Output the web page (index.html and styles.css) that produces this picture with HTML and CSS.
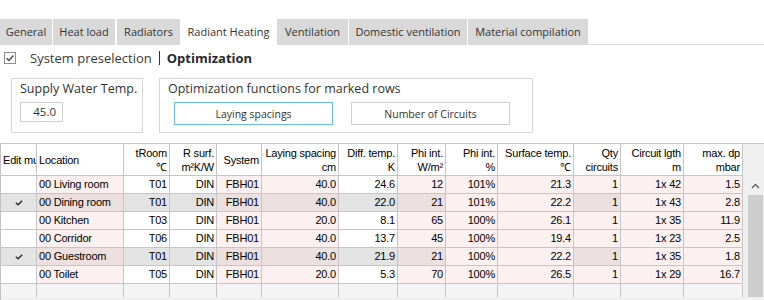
FILE: index.html
```html
<!DOCTYPE html>
<html lang="en">
<head>
    <meta charset="UTF-8">
    <title>Radiant Heating</title>
    <link rel="stylesheet" href="styles.css">
</head>
<body>
    <div class="tabs">
        <div class="tab tab-general">General</div>
        <div class="tab tab-heat">Heat load</div>
        <div class="tab tab-radiators">Radiators</div>
        <div class="tab tab-radiant active">Radiant Heating</div>
        <div class="tab tab-ventilation">Ventilation</div>
        <div class="tab tab-domestic">Domestic ventilation</div>
        <div class="tab tab-material">Material compilation</div>
        <div class="tab-rest"></div>
    </div>

    <div class="toolbar">
        <svg class="checkbox" width="12" height="12" viewBox="0 0 12 12">
            <rect x="0.5" y="0.5" width="11" height="11" fill="#fff" stroke="#8f8f8f"/>
            <polyline points="2.6,6.2 4.9,8.4 9.4,3.6" fill="none" stroke="#4a4a4a" stroke-width="1.4"/>
        </svg>
        <span class="preselect">System preselection</span>
        <span class="divider"></span>
        <span class="optimization">Optimization</span>
    </div>

    <div class="options">
        <div class="group group-supply">
            <div class="group-title">Supply Water Temp.</div>
            <div class="temp-input">45.0</div>
        </div>
        <div class="group group-functions">
            <div class="group-title">Optimization functions for marked rows</div>
            <div class="buttons">
                <button class="btn focused">Laying spacings</button>
                <button class="btn">Number of Circuits</button>
            </div>
        </div>
    </div>

    <div class="grid-wrap">
        <div class="grid">
            <div class="row head">
                <div class="hcell left">Edit mu</div>
                <div class="hcell left">Location</div>
                <div class="hcell"><span>tRoom</span><span>℃</span></div>
                <div class="hcell"><span>R surf.</span><span>m²K/W</span></div>
                <div class="hcell"><span>System</span></div>
                <div class="hcell"><span>Laying spacing</span><span>cm</span></div>
                <div class="hcell"><span>Diff. temp.</span><span>K</span></div>
                <div class="hcell"><span>Phi int.</span><span>W/m²</span></div>
                <div class="hcell"><span>Phi int.</span><span>%</span></div>
                <div class="hcell"><span>Surface temp.</span><span>℃</span></div>
                <div class="hcell"><span>Qty</span><span>circuits</span></div>
                <div class="hcell"><span>Circuit lgth</span><span>m</span></div>
                <div class="hcell"><span>max. dp</span><span>mbar</span></div>
            </div>

            <div class="row">
                <div class="cell mark"></div>
                <div class="cell pink loc">00 Living room</div>
                <div class="cell">T01</div>
                <div class="cell">DIN</div>
                <div class="cell pink">FBH01</div>
                <div class="cell pink">40.0</div>
                <div class="cell">24.6</div>
                <div class="cell pink">12</div>
                <div class="cell calc">101%</div>
                <div class="cell calc">21.3</div>
                <div class="cell pink">1</div>
                <div class="cell calc">1x 42</div>
                <div class="cell calc">1.5</div>
            </div>
            <div class="row marked">
                <div class="cell mark"><svg width="8" height="6" viewBox="0 0 8 6"><polyline points="0.8,2.6 3,4.8 7.2,0.8" fill="none" stroke="#222" stroke-width="1.3"/></svg></div>
                <div class="cell pink loc">00 Dining room</div>
                <div class="cell">T01</div>
                <div class="cell">DIN</div>
                <div class="cell pink">FBH01</div>
                <div class="cell pink">40.0</div>
                <div class="cell">22.0</div>
                <div class="cell pink">21</div>
                <div class="cell calc">101%</div>
                <div class="cell calc">22.2</div>
                <div class="cell pink">1</div>
                <div class="cell calc">1x 43</div>
                <div class="cell calc">2.8</div>
            </div>
            <div class="row">
                <div class="cell mark"></div>
                <div class="cell pink loc">00 Kitchen</div>
                <div class="cell">T03</div>
                <div class="cell">DIN</div>
                <div class="cell pink">FBH01</div>
                <div class="cell pink">20.0</div>
                <div class="cell">8.1</div>
                <div class="cell pink">65</div>
                <div class="cell calc">100%</div>
                <div class="cell calc">26.1</div>
                <div class="cell pink">1</div>
                <div class="cell calc">1x 35</div>
                <div class="cell calc">11.9</div>
            </div>
            <div class="row">
                <div class="cell mark"></div>
                <div class="cell pink loc">00 Corridor</div>
                <div class="cell">T06</div>
                <div class="cell">DIN</div>
                <div class="cell pink">FBH01</div>
                <div class="cell pink">40.0</div>
                <div class="cell">13.7</div>
                <div class="cell pink">45</div>
                <div class="cell calc">100%</div>
                <div class="cell calc">19.4</div>
                <div class="cell pink">1</div>
                <div class="cell calc">1x 23</div>
                <div class="cell calc">2.5</div>
            </div>
            <div class="row marked">
                <div class="cell mark"><svg width="8" height="6" viewBox="0 0 8 6"><polyline points="0.8,2.6 3,4.8 7.2,0.8" fill="none" stroke="#222" stroke-width="1.3"/></svg></div>
                <div class="cell pink loc">00 Guestroom</div>
                <div class="cell">T01</div>
                <div class="cell">DIN</div>
                <div class="cell pink">FBH01</div>
                <div class="cell pink">40.0</div>
                <div class="cell">21.9</div>
                <div class="cell pink">21</div>
                <div class="cell calc">100%</div>
                <div class="cell calc">22.2</div>
                <div class="cell pink">1</div>
                <div class="cell calc">1x 35</div>
                <div class="cell calc">1.8</div>
            </div>
            <div class="row">
                <div class="cell mark"></div>
                <div class="cell pink loc">00 Toilet</div>
                <div class="cell">T05</div>
                <div class="cell">DIN</div>
                <div class="cell pink">FBH01</div>
                <div class="cell pink">20.0</div>
                <div class="cell">5.3</div>
                <div class="cell pink">70</div>
                <div class="cell calc">100%</div>
                <div class="cell calc">26.5</div>
                <div class="cell pink">1</div>
                <div class="cell calc">1x 29</div>
                <div class="cell calc">16.7</div>
            </div>
            <div class="row filler">
                <div class="cell"></div><div class="cell"></div><div class="cell"></div>
                <div class="cell"></div><div class="cell"></div><div class="cell"></div>
                <div class="cell"></div><div class="cell"></div><div class="cell"></div>
                <div class="cell"></div><div class="cell"></div><div class="cell"></div>
                <div class="cell"></div>
            </div>
        </div>

        <div class="vscroll">
            <div class="vs-head"></div>
            <div class="vs-body">
                <div class="vs-bar">
                    <div class="vs-arrow">
                        <svg width="9" height="6" viewBox="0 0 9 6"><polyline points="1,5 4.5,1.5 8,5" fill="none" stroke="#606060" stroke-width="1.4"/></svg>
                    </div>
                    <div class="vs-thumb"></div>
                </div>
            </div>
        </div>
    </div>
</body>
</html>
```

FILE: styles.css
```css
html, body {
    margin: 0;
    padding: 0;
    height: 300px;
    overflow: hidden;
}
body {
    background: #fff;
    color: #333;
    font-family: "Open Sans", "Noto Sans", sans-serif;
}

/* tabs */
.tabs {
    display: flex;
    margin-top: 19px;
    height: 26px;
}
.tab {
    box-sizing: border-box;
    height: 26px;
    line-height: 25px;
    background: #d9d9d9;
    color: #333;
    font-size: 11px;
    text-align: center;
    margin-right: 1px;
}
.tab.active {
    background: #fff;
}
.tab-general { width: 52px; }
.tab-heat { width: 62px; margin-right: 2px; }
.tab-radiators { width: 63px; margin-right: 0; }
.tab-radiant { width: 97px; margin-right: 0; }
.tab-ventilation { width: 71px; }
.tab-domestic { width: 118px; }
.tab-material { width: 120px; margin-right: 0; }
.tab-rest {
    flex: 1;
    box-sizing: border-box;
    height: 26px;
    border-bottom: 1px solid #d9d9d9;
}

/* toolbar */
.toolbar {
    display: flex;
    align-items: center;
    height: 25px;
    padding-left: 4px;
}
.checkbox {
    margin-right: 14px;
    margin-top: 1px;
}
.preselect {
    font-size: 13px;
    color: #3a3a3a;
}
.divider {
    width: 1px;
    height: 14px;
    background: #333;
    margin: 1px 7px 0 7px;
}
.optimization {
    font-size: 13px;
    font-weight: bold;
    color: #2a2a2a;
}

/* option groups */
.options {
    display: flex;
    gap: 16px;
    margin-top: 8px;
    padding-left: 11px;
}
.group {
    box-sizing: border-box;
    height: 55px;
    border: 1px solid #d7d7d7;
    padding: 1px 8px 0 8px;
}
.group-supply { width: 132px; }
.group-functions { width: 374px; }
.group-title {
    font-size: 12.5px;
    line-height: 17px;
    color: #333;
    white-space: nowrap;
}
.temp-input {
    box-sizing: border-box;
    width: 43px;
    height: 20px;
    margin-top: 5px;
    border: 1px solid #cfcfcf;
    font-size: 11.5px;
    line-height: 18px;
    text-align: right;
    padding-right: 6px;
    color: #333;
}
.buttons {
    display: flex;
    gap: 18px;
    margin-top: 5px;
    padding-left: 6px;
}
.btn {
    box-sizing: border-box;
    width: 159px;
    height: 23px;
    background: #fff;
    border: 1px solid #cfcfcf;
    font-family: "Open Sans", "Noto Sans", sans-serif;
    font-size: 10.5px;
    color: #333;
    padding: 0;
}
.btn.focused {
    border-color: #6cbde6;
}

/* data grid */
.grid-wrap {
    display: flex;
    margin-top: 10px;
    background: #f0f0f0;
    height: 160px;
}
.grid {
    border-left: 1px solid #c2c2c2;
    font-family: "Liberation Sans", Arial, sans-serif;
    font-size: 11px;
    letter-spacing: -0.2px;
    color: #000;
}
.row {
    display: grid;
    grid-template-columns: 36px 87px 46px 47px 45px 77px 59px 48px 52px 76px 47px 63px 59px;
}
.cell, .hcell {
    box-sizing: border-box;
    border-right: 1px solid #c6c6c6;
    border-bottom: 1px solid #c6c6c6;
    background: #fff;
}
.cell {
    height: 18px;
    line-height: 17px;
    text-align: right;
    padding-right: 2px;
    white-space: nowrap;
    overflow: hidden;
}
.head .hcell {
    height: 33px;
    border-top: 1px solid #c6c6c6;
    display: flex;
    flex-direction: column;
    justify-content: center;
    align-items: flex-end;
    line-height: 14px;
    padding-right: 2px;
    white-space: nowrap;
    overflow: hidden;
}
.head .hcell.left {
    align-items: flex-start;
    padding-left: 2px;
}
.cell.loc {
    text-align: left;
    padding-left: 2px;
}
.cell.mark {
    display: flex;
    align-items: center;
    justify-content: center;
    padding: 0;
}
.cell.pink, .cell.calc {
    background: #fdf0f0;
}
.row.marked .cell {
    background: #e3e3e3;
}
.row.marked .cell.pink {
    background: #ebdfdf;
}
.row.marked .cell.calc {
    background: #fdf0f0;
}
.row.filler .cell {
    height: 13px;
    background: #f4f4f4;
    border-bottom: none;
}

/* vertical scrollbar */
.vscroll {
    width: 21px;
    display: flex;
    flex-direction: column;
}
.vs-head {
    box-sizing: border-box;
    height: 33px;
    border-top: 1px solid #c6c6c6;
    background: #f0f0f0;
}
.vs-body {
    flex: 1;
    display: flex;
    justify-content: flex-end;
    padding-right: 1px;
    background: #f0f0f0;
}
.vs-bar {
    width: 15px;
    display: flex;
    flex-direction: column;
}
.vs-arrow {
    height: 19px;
    display: flex;
    align-items: center;
    justify-content: center;
    background: #f0f0f0;
}
.vs-thumb {
    height: 102px;
    background: #cdcdcd;
}
```
